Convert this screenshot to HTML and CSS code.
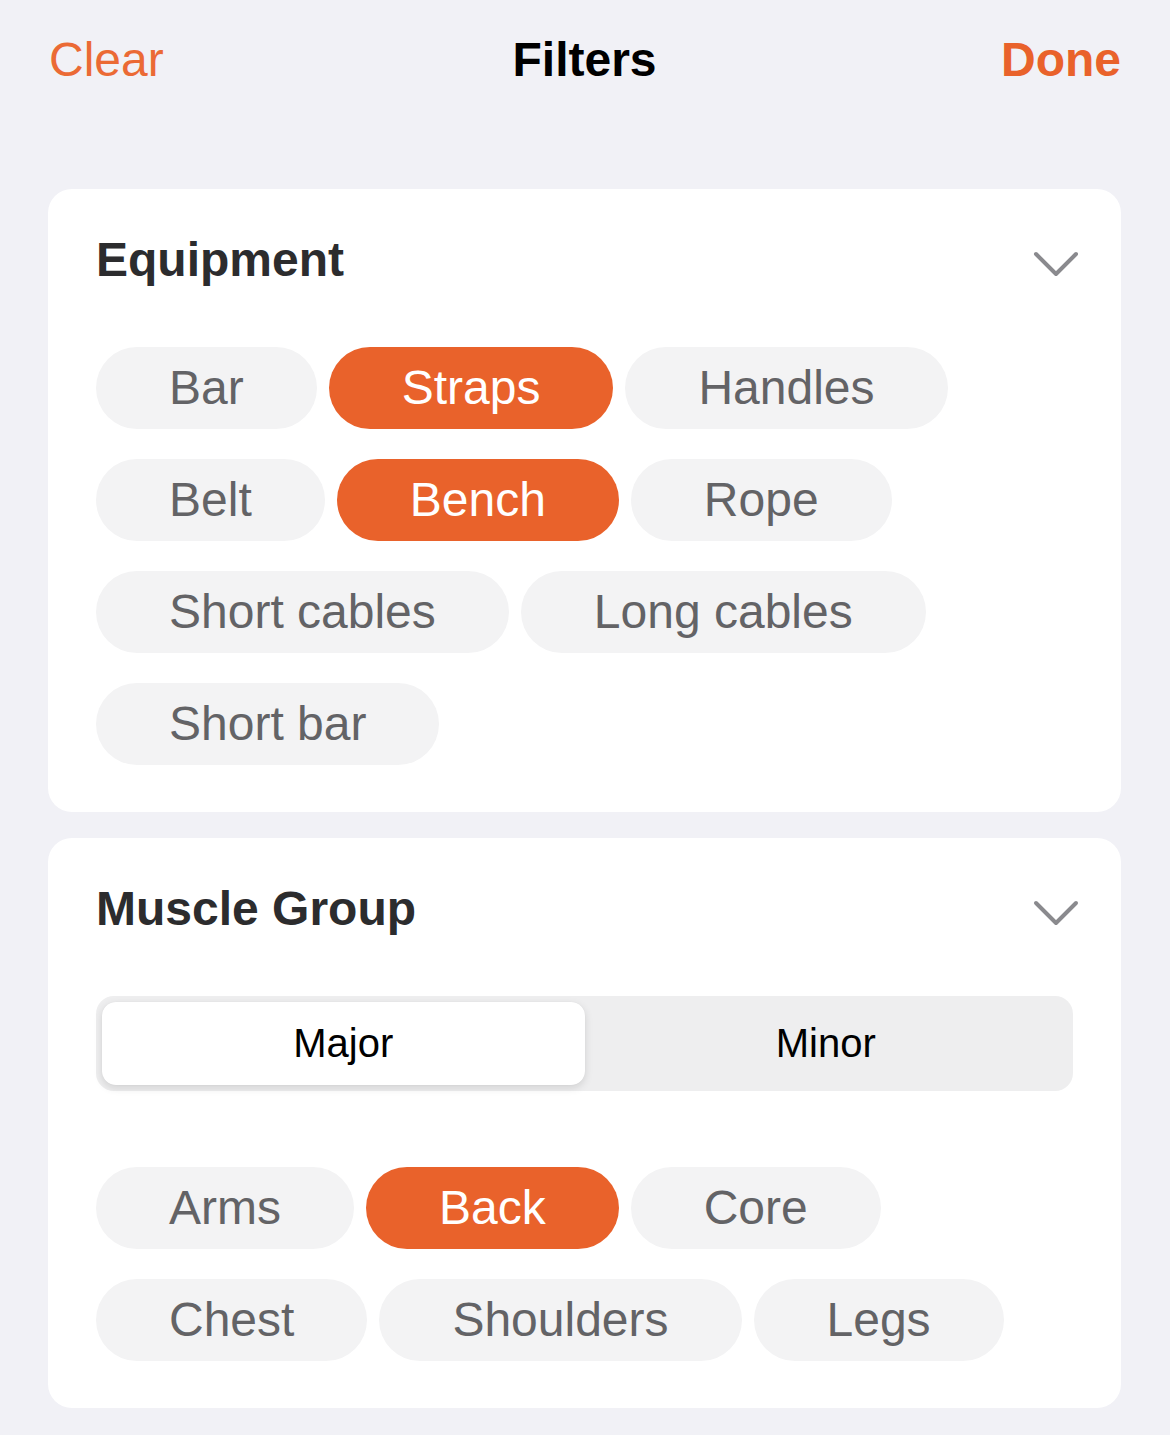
FILE: index.html
```html
<!DOCTYPE html>
<html lang="en">
<head>
<meta charset="UTF-8">
<meta name="viewport" content="width=device-width, initial-scale=1.0">
<title>Filters</title>
<link rel="stylesheet" href="styles.css">
</head>
<body>

<div class="nav-bar">
    <a class="nav-btn nav-clear" href="#">Clear</a>
    <h1 class="nav-title">Filters</h1>
    <a class="nav-btn nav-done" href="#">Done</a>
</div>

<div class="card">
    <div class="card-head">
        <h2>Equipment</h2>
        <svg class="chevron" width="46" height="28" viewBox="0 0 46 28"><path d="M3 4 L23 24 L43 4" fill="none" stroke="#8a8a8e" stroke-width="4" stroke-linecap="round" stroke-linejoin="round"/></svg>
    </div>
    <div class="chips">
        <span class="chip">Bar</span>
        <span class="chip active">Straps</span>
        <span class="chip">Handles</span>
        <span class="chip">Belt</span>
        <span class="chip active">Bench</span>
        <span class="chip">Rope</span>
        <span class="chip">Short cables</span>
        <span class="chip">Long cables</span>
        <span class="chip">Short bar</span>
    </div>
</div>

<div class="card">
    <div class="card-head">
        <h2>Muscle Group</h2>
        <svg class="chevron" width="46" height="28" viewBox="0 0 46 28"><path d="M3 4 L23 24 L43 4" fill="none" stroke="#8a8a8e" stroke-width="4" stroke-linecap="round" stroke-linejoin="round"/></svg>
    </div>
    <div class="segmented">
        <span class="segment selected">Major</span>
        <span class="segment">Minor</span>
    </div>
    <div class="chips">
        <span class="chip">Arms</span>
        <span class="chip active">Back</span>
        <span class="chip">Core</span>
        <span class="chip">Chest</span>
        <span class="chip">Shoulders</span>
        <span class="chip">Legs</span>
    </div>
</div>

</body>
</html>
```

FILE: styles.css
```css
body {
  margin: 0;
  padding: 0 49px 28px 48px;
  background-color: #f1f1f6;
  font-family: "Liberation Sans", Arial, sans-serif;
}
.nav-bar {
  display: grid;
  grid-template-columns: 1fr auto 1fr;
  align-items: center;
  padding-top: 32px;
  height: 56px;
  margin-bottom: 101px;
}
.nav-btn {
  font-size: 48px;
  line-height: 56px;
  color: #e9622b;
  text-decoration: none;
}
.nav-clear {
  justify-self: start;
  padding-left: 1px;
  color: #eb6a35;
}
.nav-done {
  justify-self: end;
  font-weight: bold;
}
.nav-title {
  margin: 0;
  font-size: 48px;
  line-height: 56px;
  font-weight: bold;
  color: #000;
}
.card {
  background: #fff;
  border-radius: 24px;
  padding: 43px 48px 47px 48px;
  margin-bottom: 26px;
}
.card-head {
  display: flex;
  justify-content: space-between;
  align-items: center;
  height: 56px;
  margin-bottom: 59px;
}
.card-head h2 {
  margin: 0;
  font-size: 48px;
  line-height: 56px;
  font-weight: bold;
  color: #2c2c2e;
}
.chevron {
  margin-right: -6px;
  margin-top: 8px;
}
.chips {
  display: flex;
  flex-wrap: wrap;
  gap: 30px 12px;
}
.chip {
  height: 82px;
  line-height: 82px;
  padding: 0 73px;
  border-radius: 41px;
  background-color: #f3f3f4;
  color: #636366;
  font-size: 48px;
}
.chip.active {
  background-color: #e9622b;
  color: #fff;
}
.segmented {
  display: grid;
  grid-template-columns: 1fr 1fr;
  height: 95px;
  padding: 6px;
  box-sizing: border-box;
  background-color: #eeeeef;
  border-radius: 18px;
  margin-bottom: 76px;
}
.segment {
  display: flex;
  align-items: center;
  justify-content: center;
  font-size: 40px;
  color: #000;
  border-radius: 14px;
}
.segment.selected {
  background: #fff;
  box-shadow: 0 3px 8px rgba(0, 0, 0, 0.12), 0 0 1px rgba(0, 0, 0, 0.08);
}
```
